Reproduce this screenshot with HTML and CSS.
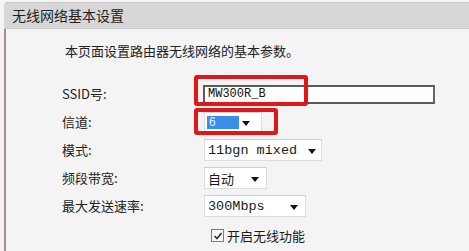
FILE: index.html
```html
<!DOCTYPE html>
<html lang="zh">
<head>
<meta charset="utf-8">
<link rel="stylesheet" href="styles.css">
</head>
<body>
<div class="panel">
  <div class="header">无线网络基本设置</div>
  <div class="content">
    <p class="intro">本页面设置路由器无线网络的基本参数。</p>
    <div class="form">
      <div class="row">
        <span class="label">SSID号:</span>
        <div class="ctl">
          <span class="input">MW300R_B</span>
          <span class="mark mark-ssid"></span>
        </div>
      </div>
      <div class="row">
        <span class="label">信道:</span>
        <div class="ctl">
          <span class="select sel-channel"><span class="hl">6</span><i class="arrow"></i></span>
          <span class="mark mark-channel"></span>
        </div>
      </div>
      <div class="row">
        <span class="label">模式:</span>
        <div class="ctl">
          <span class="select sel-mode"><span class="val mono">11bgn mixed</span><i class="arrow"></i></span>
        </div>
      </div>
      <div class="row">
        <span class="label">频段带宽:</span>
        <div class="ctl">
          <span class="select sel-bw"><span class="val">自动</span><i class="arrow"></i></span>
        </div>
      </div>
      <div class="row">
        <span class="label">最大发送速率:</span>
        <div class="ctl">
          <span class="select sel-rate"><span class="val mono">300Mbps</span><i class="arrow"></i></span>
        </div>
      </div>
      <div class="row">
        <span class="label"></span>
        <div class="ctl check-row">
          <span class="checkbox"><svg width="10" height="10" viewBox="0 0 10 10"><path d="M1.5 5 L4 7.5 L8.5 2" fill="none" stroke="#333" stroke-width="1.6"/></svg></span>
          <span class="check-text">开启无线功能</span>
        </div>
      </div>
    </div>
  </div>
</div>
</body>
</html>
```
FILE: styles.css
```css
html, body {
  margin: 0;
  padding: 0;
  background: #f4f4f4;
  width: 469px;
  height: 251px;
  overflow: hidden;
  font-family: "Noto Sans CJK SC", "Noto Sans", sans-serif;
  color: #222;
}
.panel {
  margin: 2px 0 0 4px;
}
.header {
  height: 25px;
  line-height: 25px;
  background: #d7d7d7;
  border-top: 1px solid #c9c9c9;
  border-bottom: 1px solid #cbcbcb;
  border-top-left-radius: 4px;
  padding-left: 8px;
  font-size: 14px;
  color: #1e1e1e;
}
.content {
  border-left: 2px solid #a89090;
  height: 222px;
  padding-left: 56px;
}
.intro {
  margin: 0;
  padding-top: 12px;
  height: 20px;
  line-height: 20px;
  font-size: 13px;
  padding-left: 3px;
}
.form {
  display: flex;
  flex-direction: column;
  margin-top: 19px;
}
.row {
  display: flex;
  align-items: center;
  height: 28px;
}
.label {
  width: 142px;
  font-size: 13px;
  color: #222;
  margin-top: -2px;
}
.ctl {
  position: relative;
  display: flex;
  align-items: center;
}
.input {
  box-sizing: border-box;
  width: 232px;
  height: 19px;
  margin-left: -1px;
  border: 2px solid #5a5a5a;
  border-right-color: #666;
  background: #fdfdfd;
  font-family: "Liberation Mono", monospace;
  font-size: 12px;
  line-height: 15px;
  padding-left: 3px;
  color: #111;
}
.select {
  box-sizing: border-box;
  position: relative;
  display: flex;
  align-items: center;
  height: 22px;
  background: #fff;
  border: 1px solid #dcdcdc;
  border-top-color: #cfcfcf;
  padding-left: 2px;
}
.val {
  font-size: 13px;
  color: #1a1a1a;
  padding-left: 1px;
}
.mono {
  font-family: "Liberation Mono", monospace;
  font-size: 13.5px;
}
.arrow {
  position: absolute;
  right: 7px;
  top: 9px;
  width: 0;
  height: 0;
  border-left: 4px solid transparent;
  border-right: 4px solid transparent;
  border-top: 5px solid #111;
}
.sel-channel { width: 58px; height: 20px; }
.sel-mode { width: 118px; }
.sel-bw { width: 63px; }
.sel-rate { width: 102px; }
.sel-mode .arrow { right: 5px; }
.hl {
  display: block;
  width: 32px;
  height: 13px;
  background: #3a8ee6;
  color: #e8f2ff;
  font-size: 12px;
  line-height: 13px;
  padding-left: 2px;
  box-sizing: border-box;
  font-family: "Liberation Sans", sans-serif;
}
.sel-channel .arrow { right: 11px; top: 8px; }
.mark {
  position: absolute;
  box-sizing: border-box;
  border: 4px solid #e0161b;
  border-radius: 3px;
}
.mark-ssid {
  left: -10px;
  top: -10px;
  width: 114px;
  height: 31px;
}
.mark-channel {
  left: -10px;
  top: -4px;
  width: 84px;
  height: 27px;
}
.check-row {
  padding-left: 7px;
  gap: 3px;
  margin-top: 3px;
}
.checkbox {
  box-sizing: border-box;
  width: 13px;
  height: 13px;
  border: 1px solid #7a7a7a;
  background: #f8f8f8;
  display: flex;
  align-items: center;
  justify-content: center;
}
.check-text {
  font-size: 13px;
  color: #1a1a1a;
}
```
